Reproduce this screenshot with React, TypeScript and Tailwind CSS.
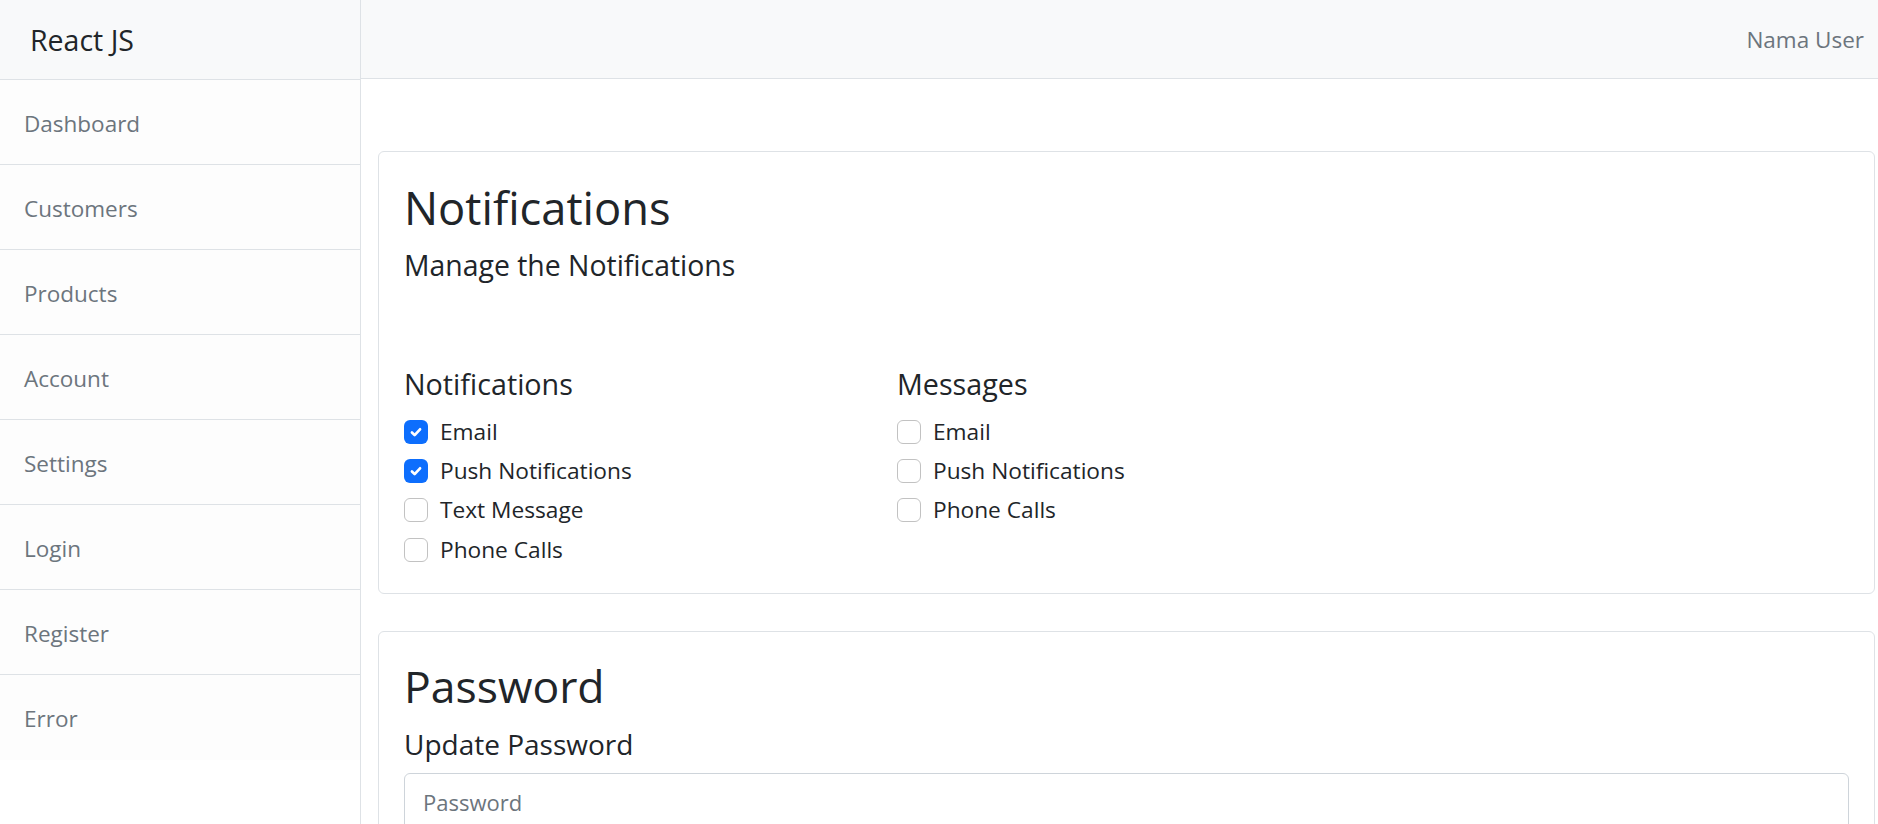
import React from "react";

const navItems = ["Dashboard", "Customers", "Products", "Account", "Settings", "Login", "Register", "Error"];

function Check({ checked, label }: { checked: boolean; label: string }) {
  return (
    <div className="flex h-[39.3px] items-center pt-[2px]">
      {checked ? (
        <span className="flex h-[24px] w-[24px] items-center justify-center rounded-[6px] bg-[#0d6efd]">
          <svg width="18" height="18" viewBox="0 0 20 20" fill="none">
            <path d="M5.5 10.5l3 3L14.5 7" stroke="#fff" strokeWidth="3" strokeLinecap="round" strokeLinejoin="round" />
          </svg>
        </span>
      ) : (
        <span className="h-[24px] w-[24px] rounded-[6px] border border-[#c2c2c2] bg-white" />
      )}
      <span className="ml-[12px] text-[22.7px] text-[#212529]">{label}</span>
    </div>
  );
}

export default function App() {
  return (
    <div className="flex h-[824px] w-full overflow-hidden bg-white" style={{ fontFamily: '"Open Sans", "Noto Sans", sans-serif' }}>
      <aside className="flex w-[361px] shrink-0 flex-col border-r border-[#dee2e6]">
        <div className="flex h-[80px] items-center border-b border-[#dee2e6] bg-[#f8f9fa] pl-[30px]">
          <span className="pt-[2px] text-[28.5px] text-[#212529]">React JS</span>
        </div>
        {navItems.map((item, i) => (
          <div
            key={item}
            className={
              i === navItems.length - 1
                ? "flex h-[85px] items-center bg-[#fdfdfd] pl-[24px]"
                : "flex h-[85px] items-center border-b border-[#dee2e6] bg-[#fdfdfd] pl-[24px]"
            }
          >
            <span className="pt-[3px] text-[22.5px] text-[#6c757d]">{item}</span>
          </div>
        ))}
      </aside>
      <main className="flex min-w-0 flex-1 flex-col">
        <header className="flex h-[79px] shrink-0 items-center justify-end border-b border-[#dee2e6] bg-[#f8f9fa] pr-[14px]">
          <span className="pt-[2px] text-[22.5px] text-[#6c757d]">Nama User</span>
        </header>
        <div className="flex flex-col gap-[37px] pl-[17px] pr-[3px] pt-[72px]">
          <section className="rounded-[6px] border border-[#dee2e6] px-[25px] pb-[25px] pt-[29px]">
            <h1 className="mb-[15px] text-[45.3px] leading-[1.2] text-[#212529]">Notifications</h1>
            <p className="text-[28.4px] leading-[1.1] text-[#212529]">Manage the Notifications</p>
            <div className="mt-[85px] flex">
              <div className="w-[493px]">
                <h4 className="mb-[10px] text-[28.7px] leading-[1.2] text-[#212529]">Notifications</h4>
                <Check checked label="Email" />
                <Check checked label="Push Notifications" />
                <Check checked={false} label="Text Message" />
                <Check checked={false} label="Phone Calls" />
              </div>
              <div>
                <h4 className="mb-[10px] text-[28.7px] leading-[1.2] text-[#212529]">Messages</h4>
                <Check checked={false} label="Email" />
                <Check checked={false} label="Push Notifications" />
                <Check checked={false} label="Phone Calls" />
              </div>
            </div>
          </section>
          <section className="rounded-[6px] border border-[#dee2e6] px-[25px] pb-[25px] pt-[27px]">
            <h1 className="mb-[16px] text-[44.5px] leading-[1.2] text-[#212529]">Password</h1>
            <p className="mb-[14px] text-[28px] leading-[1.1] text-[#212529]">Update Password</p>
            <input
              type="password"
              placeholder="Password"
              className="h-[57px] w-full rounded-[6px] border border-[#ced4da] px-[18px] text-[22px] text-[#212529] placeholder:text-[#6c757d] outline-none"
            />
          </section>
        </div>
      </main>
    </div>
  );
}
